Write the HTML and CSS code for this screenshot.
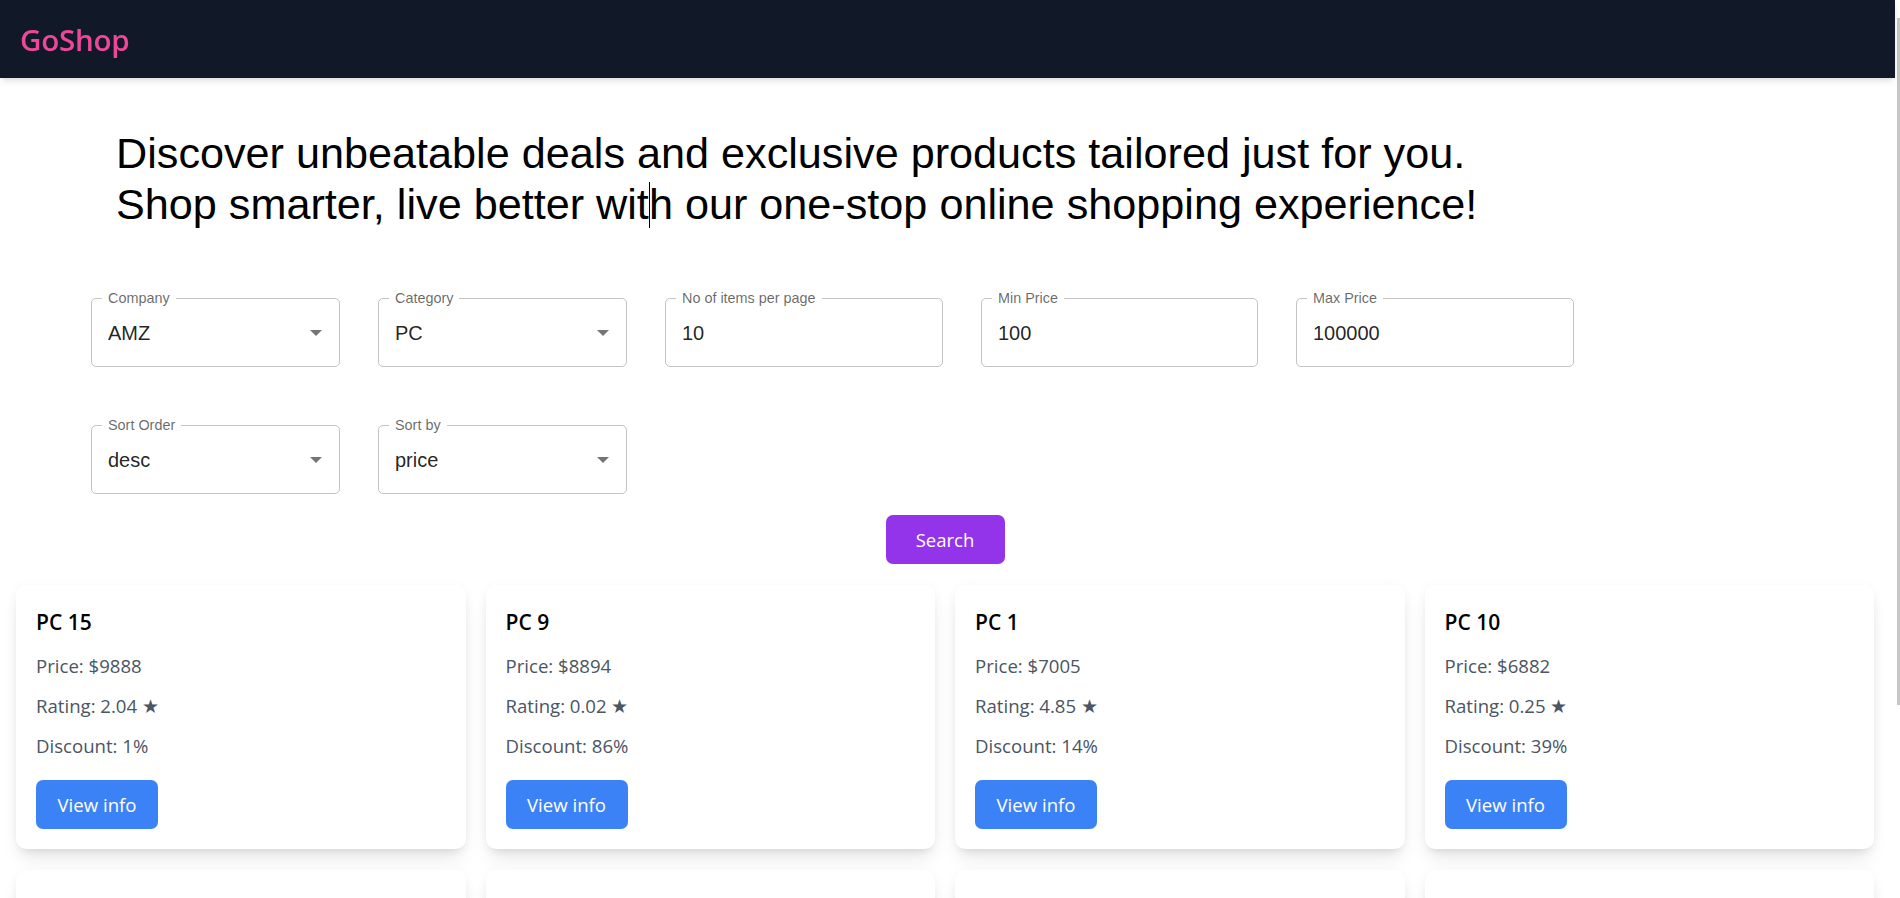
FILE: index.html
```html
<!DOCTYPE html>
<html lang="en">
<head>
<meta charset="utf-8">
<title>GoShop</title>
<link rel="stylesheet" href="styles.css">
</head>
<body>
<div class="page">
  <header class="nav">
    <span class="logo">GoShop</span>
  </header>
  <main class="main">
    <section class="hero">
      <h1 class="headline">Discover unbeatable deals and exclusive products tailored just for you.<br>Shop smarter, live better wit<span class="caret"></span>h our one-stop online shopping experience!</h1>
    </section>

    <section class="filters">
      <div class="filter-row">
        <div class="field field-select">
          <span class="label">Company</span>
          <span class="value">AMZ</span>
          <svg class="arrow" viewBox="0 0 12 6" width="12" height="6"><path d="M0 0L6 6L12 0Z"/></svg>
        </div>
        <div class="field field-select">
          <span class="label">Category</span>
          <span class="value">PC</span>
          <svg class="arrow" viewBox="0 0 12 6" width="12" height="6"><path d="M0 0L6 6L12 0Z"/></svg>
        </div>
        <div class="field field-text field-wide">
          <span class="label">No of items per page</span>
          <span class="value">10</span>
        </div>
        <div class="field field-text field-mid">
          <span class="label">Min Price</span>
          <span class="value">100</span>
        </div>
        <div class="field field-text field-wide">
          <span class="label">Max Price</span>
          <span class="value">100000</span>
        </div>
      </div>
      <div class="filter-row">
        <div class="field field-select">
          <span class="label">Sort Order</span>
          <span class="value">desc</span>
          <svg class="arrow" viewBox="0 0 12 6" width="12" height="6"><path d="M0 0L6 6L12 0Z"/></svg>
        </div>
        <div class="field field-select">
          <span class="label">Sort by</span>
          <span class="value">price</span>
          <svg class="arrow" viewBox="0 0 12 6" width="12" height="6"><path d="M0 0L6 6L12 0Z"/></svg>
        </div>
      </div>
    </section>

    <div class="actions">
      <button class="search-btn">Search</button>
    </div>

    <section class="grid">
      <article class="card">
        <h2 class="card-title">PC 15</h2>
        <p class="card-line">Price: $9888</p>
        <p class="card-line">Rating: 2.04 ★</p>
        <p class="card-line">Discount: 1%</p>
        <button class="view-btn">View info</button>
      </article>
      <article class="card">
        <h2 class="card-title">PC 9</h2>
        <p class="card-line">Price: $8894</p>
        <p class="card-line">Rating: 0.02 ★</p>
        <p class="card-line">Discount: 86%</p>
        <button class="view-btn">View info</button>
      </article>
      <article class="card">
        <h2 class="card-title">PC 1</h2>
        <p class="card-line">Price: $7005</p>
        <p class="card-line">Rating: 4.85 ★</p>
        <p class="card-line">Discount: 14%</p>
        <button class="view-btn">View info</button>
      </article>
      <article class="card">
        <h2 class="card-title">PC 10</h2>
        <p class="card-line">Price: $6882</p>
        <p class="card-line">Rating: 0.25 ★</p>
        <p class="card-line">Discount: 39%</p>
        <button class="view-btn">View info</button>
      </article>
      <article class="card card-next"></article>
      <article class="card card-next"></article>
      <article class="card card-next"></article>
      <article class="card card-next"></article>
    </section>
  </main>
</div>
<div class="scrollbar"><div class="scroll-thumb"></div></div>
</body>
</html>
```

FILE: styles.css
```css
* { box-sizing: border-box; }

html, body {
  margin: 0;
  padding: 0;
  overflow: hidden;
  background: #ffffff;
}

body {
  font-family: "Open Sans", "Noto Sans", sans-serif;
  color: #000;
}

.page {
  width: 1895px;
}

/* Navbar */
.nav {
  height: 78px;
  background: #111827;
  display: flex;
  align-items: center;
  padding-left: 20px;
  box-shadow: 0 4px 7px -1px rgba(0,0,0,0.1), 0 2px 5px -2px rgba(0,0,0,0.1);
  position: relative;
  z-index: 2;
}

.logo {
  color: #ec4899;
  font-family: "Open Sans", sans-serif;
  font-weight: 600;
  font-size: 29.6px;
  line-height: 38px;
  letter-spacing: -0.3px;
  margin-top: 1px;
}

/* Main */
.main {
  padding: 0 21px 0 16px;
}

.hero {
  padding: 50px 0 0 100px;
}

.headline {
  margin: 0;
  font-family: "Liberation Sans", Arial, sans-serif;
  font-weight: 400;
  font-size: 43.2px;
  line-height: 51px;
  color: #000;
}

.caret {
  display: inline-block;
  width: 1px;
  height: 46px;
  background: #000;
  vertical-align: -9px;
  margin-right: -1px;
}

/* Filters */
.filters {
  padding: 68px 0 0 75px;
  display: flex;
  flex-direction: column;
  gap: 58px;
}

.filter-row {
  display: flex;
  gap: 38px;
}

.field {
  position: relative;
  height: 69px;
  width: 249px;
  border: 1px solid rgba(0,0,0,0.23);
  border-radius: 5px;
  display: flex;
  align-items: center;
  padding: 0 17px 0 16px;
  font-family: "Liberation Sans", Arial, sans-serif;
}

.field-wide { width: 278px; }
.field-mid { width: 277px; }

.label {
  position: absolute;
  top: -9px;
  left: 10px;
  padding: 0 6px;
  background: #fff;
  font-size: 14.4px;
  line-height: 16px;
  color: rgba(0,0,0,0.6);
  white-space: nowrap;
}

.value {
  font-size: 20px;
  line-height: 24px;
  color: rgba(0,0,0,0.87);
}

.arrow {
  margin-left: auto;
  fill: rgba(0,0,0,0.54);
}

/* Search */
.actions {
  display: flex;
  justify-content: center;
  padding-top: 21px;
}

.search-btn {
  width: 119px;
  height: 49px;
  border: none;
  border-radius: 7px;
  background: #9333ea;
  color: #fff;
  font-family: "Open Sans", sans-serif;
  font-size: 18.5px;
  padding: 0;
  cursor: pointer;
}

/* Cards */
.grid {
  display: grid;
  grid-template-columns: repeat(4, 1fr);
  gap: 21px 20px;
  padding-top: 21px;
}

.card {
  background: #fff;
  border-radius: 10px;
  padding: 20px;
  height: 264px;
  display: flex;
  flex-direction: column;
  align-items: flex-start;
  gap: 11px;
  box-shadow: 0 12px 18px -4px rgba(0,0,0,0.1), 0 5px 8px -5px rgba(0,0,0,0.1), 0 0 12px rgba(0,0,0,0.03);
}

.card-title {
  margin: 0;
  font-size: 21px;
  line-height: 35px;
  font-weight: 600;
  color: #000;
}

.card-line {
  margin: 0;
  font-size: 18.6px;
  line-height: 29px;
  color: #4b5563;
}

.view-btn {
  margin-top: 9px;
  width: 122px;
  height: 49px;
  border: none;
  border-radius: 7px;
  background: #3b82f6;
  color: #fff;
  font-family: "Open Sans", sans-serif;
  font-size: 18.6px;
  padding: 0;
  cursor: pointer;
}

/* Fake scrollbar overlay */
.scrollbar {
  position: fixed;
  top: 0;
  right: 0;
  width: 5px;
  height: 898px;
  background: #ffffff;
}

.scroll-thumb {
  margin: 18px 0 0 2px;
  width: 3px;
  height: 687px;
  background: #c6c6c6;
}
```
